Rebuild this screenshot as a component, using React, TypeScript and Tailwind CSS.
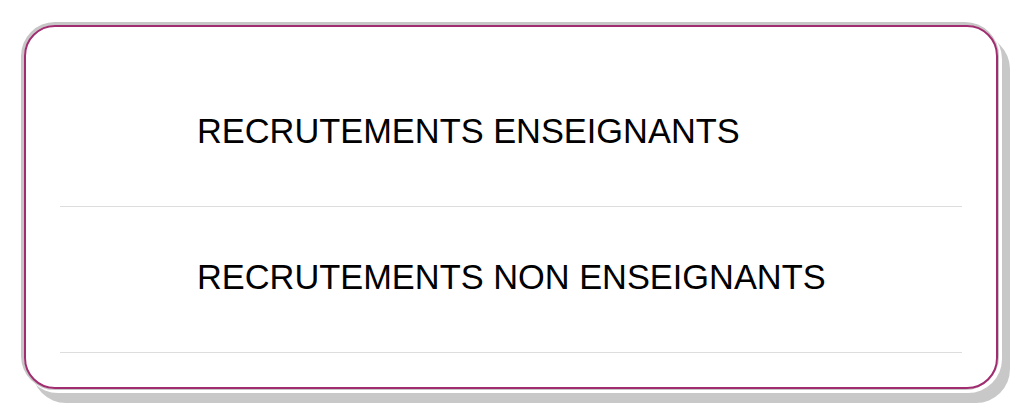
import React from "react";

const items = ["RECRUTEMENTS ENSEIGNANTS", "RECRUTEMENTS NON ENSEIGNANTS"];

export default function App() {
  return (
    <div className="min-h-screen bg-white pt-[22px] pl-[21px] font-['Liberation_Sans',Arial,sans-serif]">
      <div className="w-[978px] rounded-[34px] border-t-[3px] border-l-[3px] border-r border-b border-[#c6c6c6] shadow-[3px_3px_0_#ffffff,11px_13px_0_#c8c8c8]">
        <div className="rounded-[31px] border-2 border-[#a12c70] bg-white p-[34px]">
          <ul>
            {items.map((label) => (
              <li
                key={label}
                className="border-b border-[#dddddd] pt-[50px] pb-[55px] pl-[137px] text-[34.4px] leading-[40px] text-black"
              >
                {label}
              </li>
            ))}
          </ul>
        </div>
      </div>
    </div>
  );
}
